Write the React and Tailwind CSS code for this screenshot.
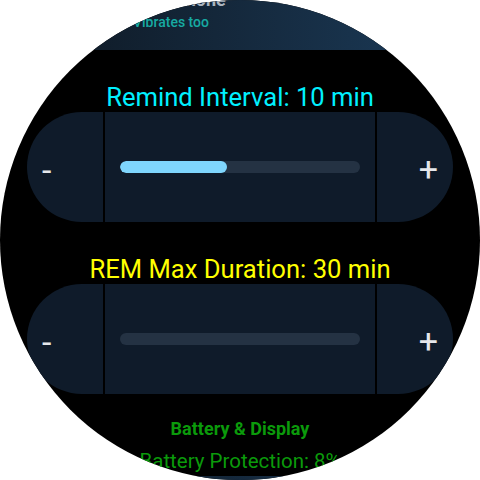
import React from 'react';

const font = { fontFamily: 'Roboto, "Noto Sans", sans-serif' };

function Stepper({ value }) {
  return (
    <div className="mx-[27px] flex h-[110px] gap-[2px]">
      <div className="flex w-[76px] items-center rounded-l-full bg-[#0f1b2a] pl-[15px] pt-[6px] text-[34px] leading-none text-[#e5e7eb]">
        -
      </div>
      <div className="flex flex-1 items-center bg-[#0f1b2a] px-[15px]">
        <div className="h-[12px] w-full overflow-hidden rounded-full bg-[#243243]">
          <div className="h-full rounded-full bg-[#7fd6fd]" style={{ width: `${value}%` }} />
        </div>
      </div>
      <div className="flex w-[76px] items-center justify-end rounded-r-full bg-[#0f1b2a] pr-[15px] pt-[4px] text-[34px] leading-none text-[#e5e7eb]">
        +
      </div>
    </div>
  );
}

export default function App() {
  return (
    <div className="h-[480px] w-[480px] bg-white" style={font}>
      <div className="h-[480px] w-[480px] overflow-hidden rounded-full bg-black">
        {/* vibrate card, scrolled mostly off screen */}
        <div className="mx-[24px] -mt-[31px] rounded-b-[28px] bg-gradient-to-r from-[#0e1823] to-[#1b3b59] pb-[19px] pl-[109px] pt-[20px]">
          <p className="text-[18px] font-bold leading-[22px] text-[#aab4bf]">Ring Phone</p>
          <p className="mt-[2px] text-[14px] font-medium leading-[18px] text-[#17aaa2]">Vibrates too</p>
        </div>

        <p className="mt-[32px] text-center text-[25.6px] leading-[30px] text-[#00f0ff]">
          Remind Interval: 10 min
        </p>
        <Stepper value={44.6} />

        <p className="mt-[32px] text-center text-[25.6px] leading-[30px] text-[#ffff00]">
          REM Max Duration: 30 min
        </p>
        <Stepper value={0} />

        <p className="mt-[24px] text-center text-[18px] font-bold leading-[22px] text-[#0b9a0b]">
          Battery &amp; Display
        </p>
        <p className="mt-[9px] text-center text-[20.5px] leading-[24px] text-[#0b9a0b]">
          Battery Protection: 8%
        </p>
        <div className="mx-[24px] mt-[3px] h-[60px] rounded-t-[28px] bg-gradient-to-r from-[#0e1823] to-[#1b3b59]" />
      </div>
    </div>
  );
}
